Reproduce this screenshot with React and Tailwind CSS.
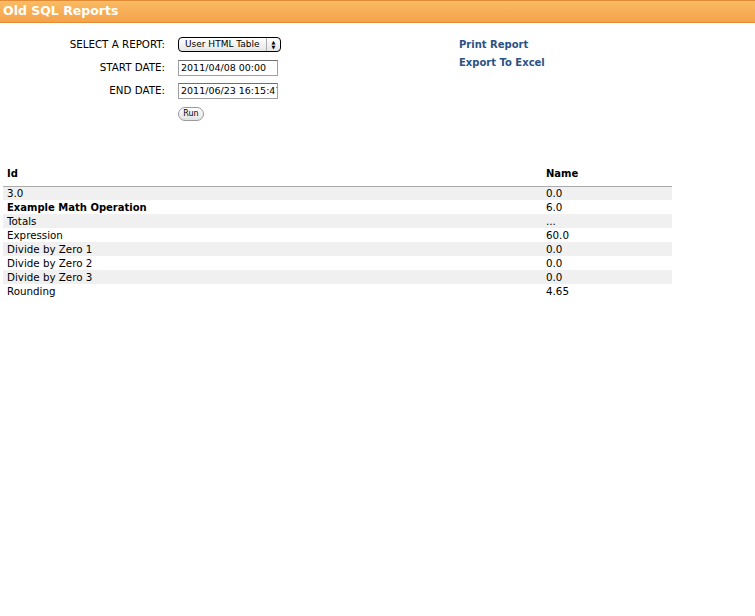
const rows = [
    { id: '3.0', name: '0.0' },
    { id: 'Example Math Operation', name: '6.0', bold: true },
    { id: 'Totals', name: '...' },
    { id: 'Expression', name: '60.0' },
    { id: 'Divide by Zero 1', name: '0.0' },
    { id: 'Divide by Zero 2', name: '0.0' },
    { id: 'Divide by Zero 3', name: '0.0' },
    { id: 'Rounding', name: '4.65' },
];

const App = () => {
    return (
        <div className="min-h-[616px] bg-white text-[10.3px] text-black" style={{ fontFamily: '"DejaVu Sans", Verdana, sans-serif' }}>
            <div className="h-[23px] border-t border-b border-[#e38b34] bg-gradient-to-b from-[#f9bb63] to-[#f4a24b] pl-[3px] flex items-center">
                <h1 className="text-[12.5px] font-bold text-white leading-none">Old SQL Reports</h1>
            </div>

            <div className="flex pt-[14px]">
                <div className="flex flex-col">
                    <div className="flex items-center h-[15px]">
                        <label className="w-[165px] text-right">SELECT A REPORT:</label>
                        <div className="ml-[13px] w-[103px] h-[15px] border border-black rounded-[4px] bg-gradient-to-b from-white to-[#e6e6e6] flex items-center text-[9px] whitespace-nowrap">
                            <span className="flex-1 pl-[6px] leading-none">User HTML Table</span>
                            <span className="w-[14px] h-full border-l border-[#aaa] flex flex-col items-center justify-center text-[5px] leading-[5px]">
                                <span>▲</span>
                                <span>▼</span>
                            </span>
                        </div>
                    </div>
                    <div className="flex items-center h-[16px] mt-[8px]">
                        <label className="w-[165px] text-right">START DATE:</label>
                        <div className="ml-[13px] w-[100px] h-[16px] border border-[#a0a0a0] border-t-[#707070] pl-[2px] text-[9.5px] leading-[14px] overflow-hidden whitespace-nowrap">2011/04/08 00:00</div>
                    </div>
                    <div className="flex items-center h-[16px] mt-[7px]">
                        <label className="w-[165px] text-right">END DATE:</label>
                        <div className="ml-[13px] w-[100px] h-[16px] border border-[#a0a0a0] border-t-[#707070] pl-[2px] text-[9.5px] leading-[14px] overflow-hidden whitespace-nowrap">2011/06/23 16:15:47</div>
                    </div>
                    <div className="flex mt-[8px]">
                        <div className="ml-[178px] w-[26px] h-[14px] rounded-full border border-[#999] bg-gradient-to-b from-white to-[#e2e2e2] text-[8px] leading-[12px] text-center">Run</div>
                    </div>
                </div>
                <div className="ml-[178px] flex flex-col gap-[5px] pt-[1px] font-bold text-[10px] text-[#2b5283]">
                    <a href="#" className="leading-[13px]">Print Report</a>
                    <a href="#" className="leading-[13px]">Export To Excel</a>
                </div>
            </div>

            <table className="mt-[40px] ml-[3px] w-[669px] border-collapse">
                <thead>
                    <tr className="border-b border-[#aaa]">
                        <th className="text-left font-bold text-[10px] pl-[4px] h-[25px] align-middle w-[539px]">Id</th>
                        <th className="text-left font-bold text-[10px] pl-[4px] align-middle">Name</th>
                    </tr>
                </thead>
                <tbody>
                    {rows.map((r, i) => (
                        <tr key={i} className={i % 2 === 0 ? 'bg-[#f0f0f0]' : ''}>
                            <td className={`pl-[4px] h-[14px] leading-[13px] ${r.bold ? 'font-bold text-[10px]' : ''}`}>{r.id}</td>
                            <td className="pl-[4px] h-[14px] leading-[13px]">{r.name}</td>
                        </tr>
                    ))}
                </tbody>
            </table>
        </div>
    )
}

export default App
